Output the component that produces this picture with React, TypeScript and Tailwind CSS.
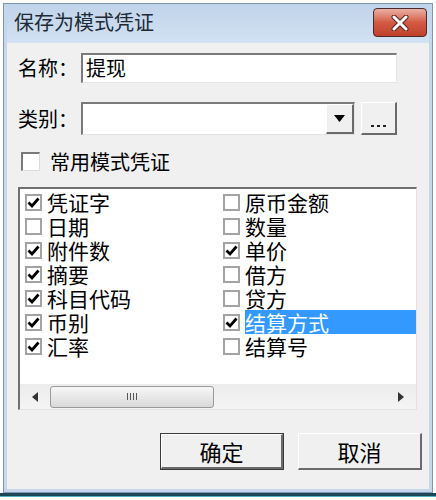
import React from "react";

const leftItems = [
  { label: "凭证字", checked: true },
  { label: "日期", checked: false },
  { label: "附件数", checked: true },
  { label: "摘要", checked: true },
  { label: "科目代码", checked: true },
  { label: "币别", checked: true },
  { label: "汇率", checked: true },
];

const rightItems = [
  { label: "原币金额", checked: false },
  { label: "数量", checked: false },
  { label: "单价", checked: true },
  { label: "借方", checked: false },
  { label: "贷方", checked: false },
  { label: "结算方式", checked: true, selected: true },
  { label: "结算号", checked: false },
];

function CheckBox({ checked }: { checked: boolean }) {
  return (
    <div className="w-[17px] h-[17px] flex items-center justify-center border-2 border-[#a3a3a3] bg-white flex-shrink-0">
      {checked && (
        <svg width="13" height="13" viewBox="0 0 13 13">
          <path d="M1.5 6.5 L5 10 L11.5 2.5" fill="none" stroke="#000" strokeWidth="2.8" />
        </svg>
      )}
    </div>
  );
}

function Item({ label, checked, selected }: { label: string; checked: boolean; selected?: boolean }) {
  return (
    <div className="flex items-center h-[24px]">
      <CheckBox checked={checked} />
      <div
        className={`ml-[5px] flex-1 h-[24px] leading-[24px] text-[21px] ${
          selected ? "bg-[#3399ff] text-white" : "text-black"
        }`}
      >
        {label}
      </div>
    </div>
  );
}

export default function App() {
  return (
    <div className="w-[436px] h-[500px] bg-white flex flex-col font-['Noto_Sans_CJK_SC',sans-serif]">
      <div className="mt-[3px] ml-[3px] w-[430px] h-[490px] border border-[#7f97b2] bg-[#c4d7ec] flex flex-col px-[3px] pb-[3px]">
        {/* title bar */}
        <div className="h-[39px] flex items-start justify-between pl-[7px] pr-[2px] bg-gradient-to-b from-[#bfd3ea] to-[#d3e2f3]">
          <span className="mt-[5px] text-[20px] leading-[26px] text-[#1e2a36]">保存为模式凭证</span>
          <button className="mt-[4px] w-[54px] h-[29px] rounded-[4px] border border-[#4a2a2a] bg-gradient-to-b from-[#eab0a4] via-[#d25a43] to-[#c0402a] flex items-center justify-center">
            <svg width="20" height="16" viewBox="0 0 20 16">
              <path d="M4 2 L16 14 M16 2 L4 14" stroke="#5a2323" strokeWidth="5" strokeLinecap="round" />
              <path d="M4 2 L16 14 M16 2 L4 14" stroke="#fff" strokeWidth="3" strokeLinecap="round" />
            </svg>
          </button>
        </div>

        {/* client */}
        <div className="flex-1 bg-[#f0f0f0] flex flex-col pt-[10px]">
          <div className="flex items-center h-[30px] pl-[11px]">
            <span className="w-[63px] text-[20px] leading-[30px] text-black">名称：</span>
            <div className="w-[316px] h-[30px] bg-white border-t-2 border-l-2 border-t-[#7a7a7a] border-l-[#7a7a7a] border-r border-b border-r-[#e4e4e4] border-b-[#e4e4e4] pl-[3px] text-[20px] leading-[26px] text-black">
              提现
            </div>
          </div>

          <div className="flex items-center h-[33px] pl-[11px] mt-[19px]">
            <span className="w-[63px] text-[20px] leading-[30px] text-black">类别：</span>
            <div className="w-[274px] h-[33px] bg-white border-t-2 border-l-2 border-t-[#7a7a7a] border-l-[#7a7a7a] border-r border-b border-r-[#e4e4e4] border-b-[#e4e4e4] flex justify-end">
              <div className="w-[28px] h-full bg-[#f0f0f0] border-t border-l border-t-white border-l-white border-r-2 border-b-2 border-r-[#6a6a6a] border-b-[#6a6a6a] flex items-center justify-center">
                <svg width="11" height="7" viewBox="0 0 11 7">
                  <path d="M0 0 H11 L5.5 7 Z" fill="#000" />
                </svg>
              </div>
            </div>
            <div className="ml-[6px] w-[36px] h-[33px] bg-[#f0f0f0] border-t border-l border-t-white border-l-white border-r-2 border-b-2 border-r-[#6a6a6a] border-b-[#6a6a6a] flex items-end justify-center pb-[6px]">
              <div className="flex gap-[3px]">
                <div className="w-[3px] h-[2px] bg-[#222]" />
                <div className="w-[3px] h-[2px] bg-[#222]" />
                <div className="w-[3px] h-[2px] bg-[#222]" />
              </div>
            </div>
          </div>

          <div className="flex items-center h-[19px] pl-[14px] mt-[17px]">
            <div className="w-[19px] h-[19px] bg-white border-t-2 border-l-2 border-t-[#7a7a7a] border-l-[#7a7a7a] border-r border-b border-r-[#dcdcdc] border-b-[#dcdcdc]" />
            <span className="ml-[10px] text-[20px] leading-[19px] text-black">常用模式凭证</span>
          </div>

          {/* list */}
          <div className="mt-[16px] ml-[11px] w-[399px] h-[223px] bg-white border-t-2 border-l-2 border-t-[#707070] border-l-[#707070] border-r border-b border-r-[#e2e2e2] border-b-[#e2e2e2] flex flex-col">
            <div className="flex pt-[1px]">
              <div className="w-[201px] pl-[5px] flex flex-col">
                {leftItems.map((it) => (
                  <Item key={it.label} label={it.label} checked={it.checked} />
                ))}
              </div>
              <div className="flex-1 pl-[2px] flex flex-col">
                {rightItems.map((it) => (
                  <Item key={it.label} label={it.label} checked={it.checked} selected={it.selected} />
                ))}
              </div>
            </div>
            <div className="mt-auto h-[25px] bg-gradient-to-b from-[#ececec] to-[#f4f4f4] flex items-center">
              <div className="w-[30px] flex justify-center">
                <svg width="6" height="10" viewBox="0 0 6 10">
                  <path d="M6 0 V10 L0 5 Z" fill="#333" />
                </svg>
              </div>
              <div className="w-[164px] h-[22px] rounded-[3px] border border-[#9a9a9a] bg-gradient-to-b from-[#f7f7f7] to-[#d9d9d9] flex items-center justify-center gap-[2px]">
                <div className="w-[1px] h-[7px] bg-[#555]" />
                <div className="w-[1px] h-[7px] bg-[#555]" />
                <div className="w-[1px] h-[7px] bg-[#555]" />
                <div className="w-[1px] h-[7px] bg-[#555]" />
              </div>
              <div className="flex-1" />
              <div className="w-[30px] flex justify-center">
                <svg width="6" height="10" viewBox="0 0 6 10">
                  <path d="M0 0 V10 L6 5 Z" fill="#333" />
                </svg>
              </div>
            </div>
          </div>

          {/* buttons */}
          <div className="mt-[23px] flex justify-end pr-[7px] gap-[14px]">
            <button className="w-[124px] h-[37px] border border-[#3a3a3a] flex">
              <div className="flex-1 border-t border-l border-t-white border-l-white border-r-2 border-b-2 border-r-[#6a6a6a] border-b-[#6a6a6a] bg-[#f0f0f0] flex items-center justify-center text-[22px] leading-[28px] text-black">
                确定
              </div>
            </button>
            <button className="w-[124px] h-[37px] border-t border-l border-t-white border-l-white border-r-2 border-b-2 border-r-[#6a6a6a] border-b-[#6a6a6a] bg-[#f0f0f0] flex items-center justify-center text-[22px] leading-[28px] text-black">
              取消
            </button>
          </div>
        </div>
      </div>
      <div className="h-[3px] bg-[#1d4656]" />
      <div className="h-[1px] bg-[#5db0c2]" />
    </div>
  );
}
